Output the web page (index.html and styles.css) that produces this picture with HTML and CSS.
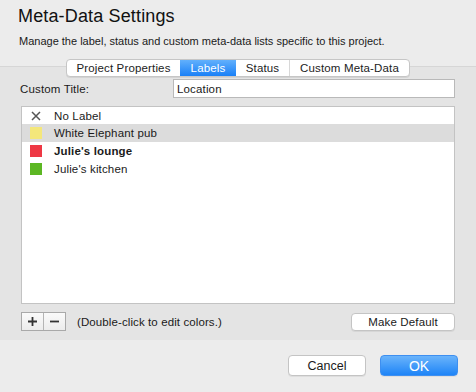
FILE: index.html
```html
<!DOCTYPE html>
<html>
<head>
	<meta charset="utf-8">
	<title>Meta-Data Settings</title>
	<link rel="stylesheet" href="styles.css">
</head>
<body>
	<div class="sheet">
		<div class="header">
			<h1 class="title">Meta-Data Settings</h1>
			<p class="subtitle">Manage the label, status and custom meta-data lists specific to this project.</p>
		</div>
		<div class="panel">
			<div class="tabs">
				<div class="tab properties">Project Properties</div>
				<div class="tab labels active">Labels</div>
				<div class="tab status">Status</div>
				<div class="tab custom">Custom Meta-Data</div>
			</div>
			<div class="field-row">
				<label class="field-label">Custom Title:</label>
				<input class="field-input" type="text" value="Location">
			</div>
			<div class="list">
				<div class="list-row">
					<span class="swatch">
						<svg width="10" height="10" viewBox="0 0 10 10"><path d="M1 1 L9 9 M9 1 L1 9" stroke="#555" stroke-width="1.5" fill="none"/></svg>
					</span>
					<span class="row-text">No Label</span>
				</div>
				<div class="list-row selected">
					<span class="swatch" style="background:#f4e77b"></span>
					<span class="row-text">White Elephant pub</span>
				</div>
				<div class="list-row">
					<span class="swatch" style="background:#ee3844"></span>
					<span class="row-text bold">Julie's lounge</span>
				</div>
				<div class="list-row">
					<span class="swatch" style="background:#5cb723"></span>
					<span class="row-text">Julie's kitchen</span>
				</div>
			</div>
			<div class="list-tools">
				<div class="plusminus">
					<div class="pm-btn">
						<svg width="9" height="9" viewBox="0 0 9 9"><path d="M4.5 0 V9 M0 4.5 H9" stroke="#333" stroke-width="1.8" fill="none"/></svg>
					</div>
					<div class="pm-btn">
						<svg width="9" height="9" viewBox="0 0 9 9"><path d="M0 4.5 H9" stroke="#333" stroke-width="1.8" fill="none"/></svg>
					</div>
				</div>
				<span class="hint">(Double-click to edit colors.)</span>
				<button class="btn small">Make Default</button>
			</div>
		</div>
		<div class="footer">
			<button class="btn">Cancel</button>
			<button class="btn primary">OK</button>
		</div>
	</div>
</body>
</html>
```
FILE: styles.css
```css
html, body {
	margin: 0;
	padding: 0;
	width: 476px;
	height: 392px;
	overflow: hidden;
	background-color: #ececec;
	font-family: 'Liberation Sans', Arial, sans-serif;
	color: #1a1a1a;
}
.sheet {
	display: flex;
	flex-direction: column;
	height: 392px;
}
.header {
	height: 66px;
	padding: 0 18px;
	box-sizing: border-box;
}
.title {
	margin: 0;
	padding-top: 5px;
	font-size: 18px;
	font-weight: normal;
	line-height: 22px;
	letter-spacing: .15px;
	color: #111;
}
.subtitle {
	margin: 7px 0 0 1px;
	font-size: 11px;
	line-height: 14px;
	letter-spacing: 0;
}
.panel {
	height: 274px;
	box-sizing: border-box;
	border-top: 1px solid #d6d6d6;
	background-color: #e4e4e4;
	padding: 0 21px 0 20px;
	display: flex;
	flex-direction: column;
}
.tabs {
	align-self: flex-start;
	margin: -8px 0 0 46px;
	display: flex;
	height: 18px;
	box-sizing: border-box;
	border: 1px solid #c6c6c6;
	border-radius: 4px;
	background-color: #fff;
	box-shadow: 0 1px 0 rgba(0,0,0,0.07);
	overflow: hidden;
}
.tab {
	box-sizing: border-box;
	white-space: nowrap;
	text-align: center;
	font-size: 11.5px;
	line-height: 16px;
	letter-spacing: .15px;
	color: #222;
}
.tab.properties {
	width: 113px;
}
.tab.labels {
	width: 56px;
}
.tab.status {
	width: 53px;
}
.tab.custom {
	width: 120px;
	border-left: 1px solid #d8d8d8;
}
.tab.active {
	background: linear-gradient(#62b0fc, #1a80f7);
	color: #fff;
}
.field-row {
	display: flex;
	align-items: center;
	margin-top: 2px;
}
.field-label {
	width: 153px;
	font-size: 11.5px;
	letter-spacing: .15px;
}
.field-input {
	width: 282px;
	height: 19px;
	box-sizing: border-box;
	border: 1px solid #b9b9b9;
	margin: 0;
	padding: 0 3px;
	font-family: inherit;
	font-size: 11.5px;
	letter-spacing: .15px;
	color: #1a1a1a;
	outline: none;
}
.list {
	margin: 8px 0 0 1px;
	height: 198px;
	box-sizing: border-box;
	border: 1px solid #c3c3c3;
	background-color: #fff;
}
.list-row {
	display: flex;
	align-items: center;
	height: 18px;
	padding-left: 8px;
}
.list-row:first-child {
	height: 17px;
}
.list-row.selected {
	background-color: #dcdcdc;
}
.swatch {
	width: 12px;
	height: 12px;
	display: flex;
	align-items: center;
	justify-content: center;
}
.row-text {
	margin-left: 12px;
	font-size: 11.5px;
	letter-spacing: .15px;
}
.row-text.bold {
	font-weight: bold;
}
.list-tools {
	display: flex;
	align-items: center;
	margin-top: 8px;
	margin-left: 1px;
}
.plusminus {
	display: flex;
	height: 19px;
	box-sizing: border-box;
	border: 1px solid #a9a9a9;
	background: linear-gradient(#fafafa, #ececec);
}
.pm-btn {
	width: 21px;
	display: flex;
	align-items: center;
	justify-content: center;
}
.pm-btn + .pm-btn {
	border-left: 1px solid #b4b4b4;
}
.hint {
	margin-left: 11px;
	font-size: 11.5px;
	letter-spacing: .1px;
}
.btn {
	margin-left: auto;
	width: 78px;
	height: 21px;
	box-sizing: border-box;
	border: 1px solid #c4c4c4;
	border-radius: 4px;
	background-color: #fff;
	box-shadow: 0 1px 0 rgba(0,0,0,0.06);
	font-family: inherit;
	font-size: 12.5px;
	color: #1a1a1a;
	padding: 0;
}
.btn.small {
	width: 104px;
	height: 18px;
	font-size: 11.5px;
	letter-spacing: .15px;
}
.footer {
	display: flex;
	justify-content: flex-end;
	gap: 14px;
	padding: 15px 18px 0 0;
}
.footer .btn {
	margin-left: 0;
}
.btn.primary {
	border-color: #3e8ff0;
	background: linear-gradient(#6ab4fb, #1e84f7);
	color: #fff;
	font-size: 14px;
}
```
